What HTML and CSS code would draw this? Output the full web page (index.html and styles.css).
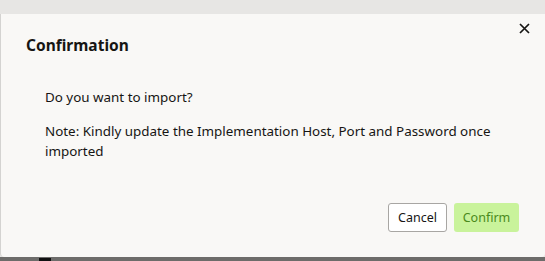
FILE: index.html
```html
<!DOCTYPE html>
<html lang="en">
<head>
  <meta charset="UTF-8" />
  <title>Confirmation</title>
  <link rel="stylesheet" href="styles.css">
</head>
<body>

  <!-- Backdrop -->
  <div class="backdrop">
    <div class="dialog">
      <div class="dialog-header">
        <h2>Confirmation</h2>
        <button class="close-btn" aria-label="Close">
          <svg width="11" height="11" viewBox="0 0 11 11">
            <path d="M1 1 L10 10 M10 1 L1 10" stroke="#161513" stroke-width="1.7" fill="none"/>
          </svg>
        </button>
      </div>

      <div class="dialog-body">
        <p>Do you want to import?</p>
        <p>Note: Kindly update the Implementation Host, Port and Password once imported</p>
      </div>

      <div class="dialog-footer">
        <button class="btn btn-cancel">Cancel</button>
        <button class="btn btn-confirm">Confirm</button>
      </div>
    </div>
    <div class="under-bar"><span class="under-mark"></span></div>
  </div>

</body>
</html>
```

FILE: styles.css
```css
/* Reset & Base */
* {
  margin: 0;
  padding: 0;
  box-sizing: border-box;
}

body, html {
  font-family: 'Noto Sans', 'Open Sans', sans-serif;
  background-color: #e7e6e4;
  color: #161513;
  width: 545px;
  height: 261px;
  overflow: hidden;
}

.backdrop {
  height: 261px;
  padding-top: 14px;
  display: flex;
  flex-direction: column;
  background-color: #e7e6e4;
}

.dialog {
  height: 243px;
  background-color: #f9f8f6;
  border-radius: 0 0 4px 4px;
  display: flex;
  flex-direction: column;
  border-left: 1px solid #d4d3d1;
}

.dialog-header {
  position: relative;
  padding: 19px 16px 0 25px;
}

.dialog-header h2 {
  font-size: 15.5px;
  font-weight: bold;
  line-height: 24px;
}

.close-btn {
  position: absolute;
  top: 9px;
  right: 15px;
  display: flex;
  background: none;
  border: none;
  cursor: pointer;
}

.dialog-body {
  padding: 30px 30px 0 44px;
  font-size: 13.4px;
  line-height: 20px;
}

.dialog-body p + p {
  margin-top: 14px;
}

.dialog-footer {
  margin-top: auto;
  display: flex;
  justify-content: flex-end;
  gap: 7px;
  padding: 0 26px 25px 0;
}

.btn {
  height: 29px;
  font-family: inherit;
  font-size: 12.5px;
  font-weight: normal;
  border-radius: 3px;
  cursor: pointer;
}

.btn-cancel {
  width: 59px;
  background-color: #ffffff;
  border: 1px solid #a8a6a3;
  color: #161513;
}

.btn-confirm {
  width: 65px;
  background-color: #c9f39b;
  border: none;
  color: #4a8a1c;
}

.under-bar {
  flex: 1;
  background-color: #6d6c6a;
  position: relative;
}

.under-mark {
  position: absolute;
  left: 39px;
  top: 1px;
  width: 12px;
  height: 3px;
  background-color: #111;
}
```
